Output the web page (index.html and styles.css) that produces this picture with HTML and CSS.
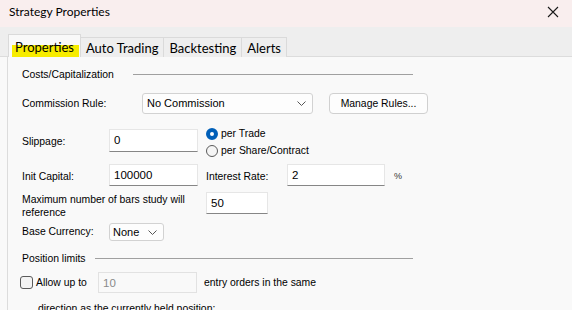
FILE: index.html
```html
<!DOCTYPE html>
<html>
  <head>
    <meta charset="utf-8">
    <meta name="viewport" content="width=device-width, initial-scale=1" />
    <title>Strategy Properties</title>
    <link rel="stylesheet" href="styles.css">
  </head>
  <body>
    <div class="dialog">
      <header class="titlebar">
        <span class="title">Strategy Properties</span>
        <svg class="close" width="12" height="12" viewBox="0 0 12 12">
          <path d="M1 1 L11 11 M11 1 L1 11" stroke="#1a1a1a" stroke-width="1.1" fill="none" />
        </svg>
      </header>

      <nav class="tabs">
        <div class="tab active"><span class="mark">Properties</span></div>
        <div class="tab">Auto Trading</div>
        <div class="tab">Backtesting</div>
        <div class="tab">Alerts</div>
      </nav>

      <section class="panel">
        <div class="group-head head-costs">
          <span class="group-title">Costs/Capitalization</span>
          <span class="rule"></span>
        </div>

        <div class="row row-commission">
          <span class="lbl lbl-commission">Commission Rule:</span>
          <div class="select select-commission">
            <span>No Commission</span>
            <svg class="chev" width="9" height="5" viewBox="0 0 9 5"><path d="M0.5 0.5 L4.5 4.5 L8.5 0.5" stroke="#555" fill="none" /></svg>
          </div>
          <button class="btn">Manage Rules...</button>
        </div>

        <div class="row row-slippage">
          <span class="lbl lbl-short">Slippage:</span>
          <div class="input input-short">0</div>
          <div class="radios">
            <div class="radio-item"><span class="radio on"></span>per Trade</div>
            <div class="radio-item"><span class="radio"></span>per Share/Contract</div>
          </div>
        </div>

        <div class="row row-capital">
          <span class="lbl lbl-short">Init Capital:</span>
          <div class="input input-short">100000</div>
          <span class="lbl lbl-rate">Interest Rate:</span>
          <div class="input input-rate">2</div>
          <span class="pct">%</span>
        </div>

        <div class="row row-bars">
          <span class="lbl lbl-bars">Maximum number of bars study will reference</span>
          <div class="input input-bars">50</div>
        </div>

        <div class="row row-currency">
          <span class="lbl lbl-short">Base Currency:</span>
          <div class="select select-currency">
            <span>None</span>
            <svg class="chev" width="9" height="5" viewBox="0 0 9 5"><path d="M0.5 0.5 L4.5 4.5 L8.5 0.5" stroke="#555" fill="none" /></svg>
          </div>
        </div>

        <div class="group-head head-limits">
          <span class="group-title">Position limits</span>
          <span class="rule"></span>
        </div>

        <div class="row row-allow">
          <span class="check"></span>
          <span class="lbl lbl-allow">Allow up to</span>
          <div class="input input-disabled">10</div>
          <span class="lbl">entry orders in the same</span>
        </div>

        <p class="note">direction as the currently held position:</p>
      </section>
    </div>
  </body>
</html>
```

FILE: styles.css
```css
* {
  box-sizing: border-box;
  margin: 0;
  padding: 0;
}
html,
body {
  height: 100%;
}
body {
  font-family: "Liberation Sans", Arial, sans-serif;
  font-size: 10.4px;
  line-height: 13px;
  color: #000;
  background: #f9f9f9;
  overflow: hidden;
}
.dialog {
  display: flex;
  flex-direction: column;
  height: 100%;
}
.titlebar {
  display: flex;
  align-items: center;
  justify-content: space-between;
  flex: none;
  height: 27px;
  padding: 0 13px 4px 9px;
  background: #f9eeee;
}
.title {
  font-family: Lato, "Noto Sans", sans-serif;
  font-size: 12px;
}
.tabs {
  display: flex;
  align-items: flex-end;
  flex: none;
  height: 30px;
  padding-left: 8px;
  background: #eeeeee;
  border-bottom: 1px solid #dcdcdc;
}
.tab {
  height: 20px;
  margin-bottom: -1px;
  padding: 4px 5px 0;
  border: 1px solid #dadada;
  border-bottom: none;
  border-left: none;
  background: #eeeeee;
  font-family: Lato, "Noto Sans", sans-serif;
  font-size: 13px;
  white-space: nowrap;
}
.tab.active {
  position: relative;
  height: 23px;
  padding: 6px 6px 0;
  border-left: 1px solid #dadada;
  background: #f9f9f9;
}
.mark {
  position: relative;
}
.tab.active::before {
  content: "";
  position: absolute;
  left: 3px;
  right: 1px;
  top: 10px;
  bottom: 0;
  background: #f7ec00;
}
.panel {
  flex: 1;
  margin-left: 7px;
  padding: 10px 0 0 14px;
  border-left: 1px solid #dcdcdc;
  background: #f9f9f9;
}
.group-head {
  display: flex;
  align-items: center;
  width: 391px;
  height: 14px;
  white-space: nowrap;
}
.group-title {
  flex: none;
}
.head-costs .group-title {
  width: 111px;
}
.head-limits {
  margin-top: 10px;
}
.head-limits .group-title {
  width: 73px;
}
.rule {
  flex: 1;
  height: 1px;
  background: #a0a0a0;
}
.row {
  display: flex;
  align-items: center;
}
.lbl {
  flex: none;
  white-space: nowrap;
}
.lbl-commission {
  width: 120px;
}
.lbl-short {
  width: 87px;
}
.lbl-rate {
  width: 81px;
  margin-left: 8px;
}
.lbl-bars {
  width: 170px;
  margin-right: 14px;
  white-space: normal;
}
.lbl-allow {
  width: 62px;
}
.row-commission {
  height: 21px;
  margin-top: 12px;
}
.row-slippage {
  align-items: flex-start;
  height: 29px;
  margin-top: 14px;
}
.row-slippage .lbl {
  margin-top: 7px;
}
.row-slippage .input {
  height: 23px;
  margin-top: 1px;
}
.row-slippage .radios {
  margin-top: -1px;
}
.row-capital {
  height: 22px;
  margin-top: 7px;
}
.row-capital .lbl {
  margin-top: 3px;
}
.row-bars {
  align-items: flex-start;
  height: 26px;
  margin-top: 6px;
}
.row-bars .lbl {
  margin-top: 1px;
}
.row-currency {
  height: 18px;
  margin-top: 5px;
}
.row-currency .lbl {
  margin-top: -1px;
}
.row-allow {
  height: 21px;
  margin-top: 7px;
  margin-left: -2px;
}
.input {
  flex: none;
  height: 22px;
  padding: 3px 4px 0;
  background: #ffffff;
  border: 1px solid #e6e6e6;
  border-bottom: 1px solid #868686;
  font-size: 11.5px;
  line-height: 14px;
}
.input-short {
  width: 89px;
}
.input-rate {
  width: 98px;
}
.input-bars {
  width: 62px;
}
.input-disabled {
  width: 99px;
  height: 21px;
  margin-right: 7px;
  background: #f9f9f9;
  border: 1px solid #e2e2e2;
  color: #8a8a8a;
}
.pct {
  margin-left: 9px;
  margin-top: 2px;
  font-size: 9px;
  color: #333;
}
.select {
  display: flex;
  align-items: center;
  justify-content: space-between;
  flex: none;
  height: 21px;
  padding: 0 6px 0 4px;
  background: #fdfdfd;
  border: 1px solid #d2d2d2;
  border-radius: 3px;
  font-size: 11px;
  white-space: nowrap;
}
.select-commission {
  width: 171px;
}
.select-currency {
  width: 55px;
  height: 18px;
  padding-left: 3px;
}
.chev {
  flex: none;
}
.btn {
  width: 99px;
  height: 21px;
  margin-left: 16px;
  background: #fdfdfd;
  border: 1px solid #d0d0d0;
  border-radius: 4px;
  font-family: inherit;
  font-size: 10.4px;
  color: #000;
}
.radios {
  display: flex;
  flex-direction: column;
  gap: 4px;
  margin-left: 8px;
  white-space: nowrap;
}
.radio-item {
  display: flex;
  align-items: center;
  gap: 3px;
}
.radio {
  display: block;
  width: 12px;
  height: 12px;
  border: 1px solid #5a5a5a;
  border-radius: 50%;
  background: #f5f5f5;
}
.radio.on {
  border: 4px solid #005fb8;
  background: #ffffff;
}
.check {
  flex: none;
  width: 13px;
  height: 13px;
  margin-right: 3px;
  border: 1px solid #5a5a5a;
  border-radius: 3px;
  background: #f3f3f3;
}
.note {
  margin: 9px 0 0 16px;
}
```
